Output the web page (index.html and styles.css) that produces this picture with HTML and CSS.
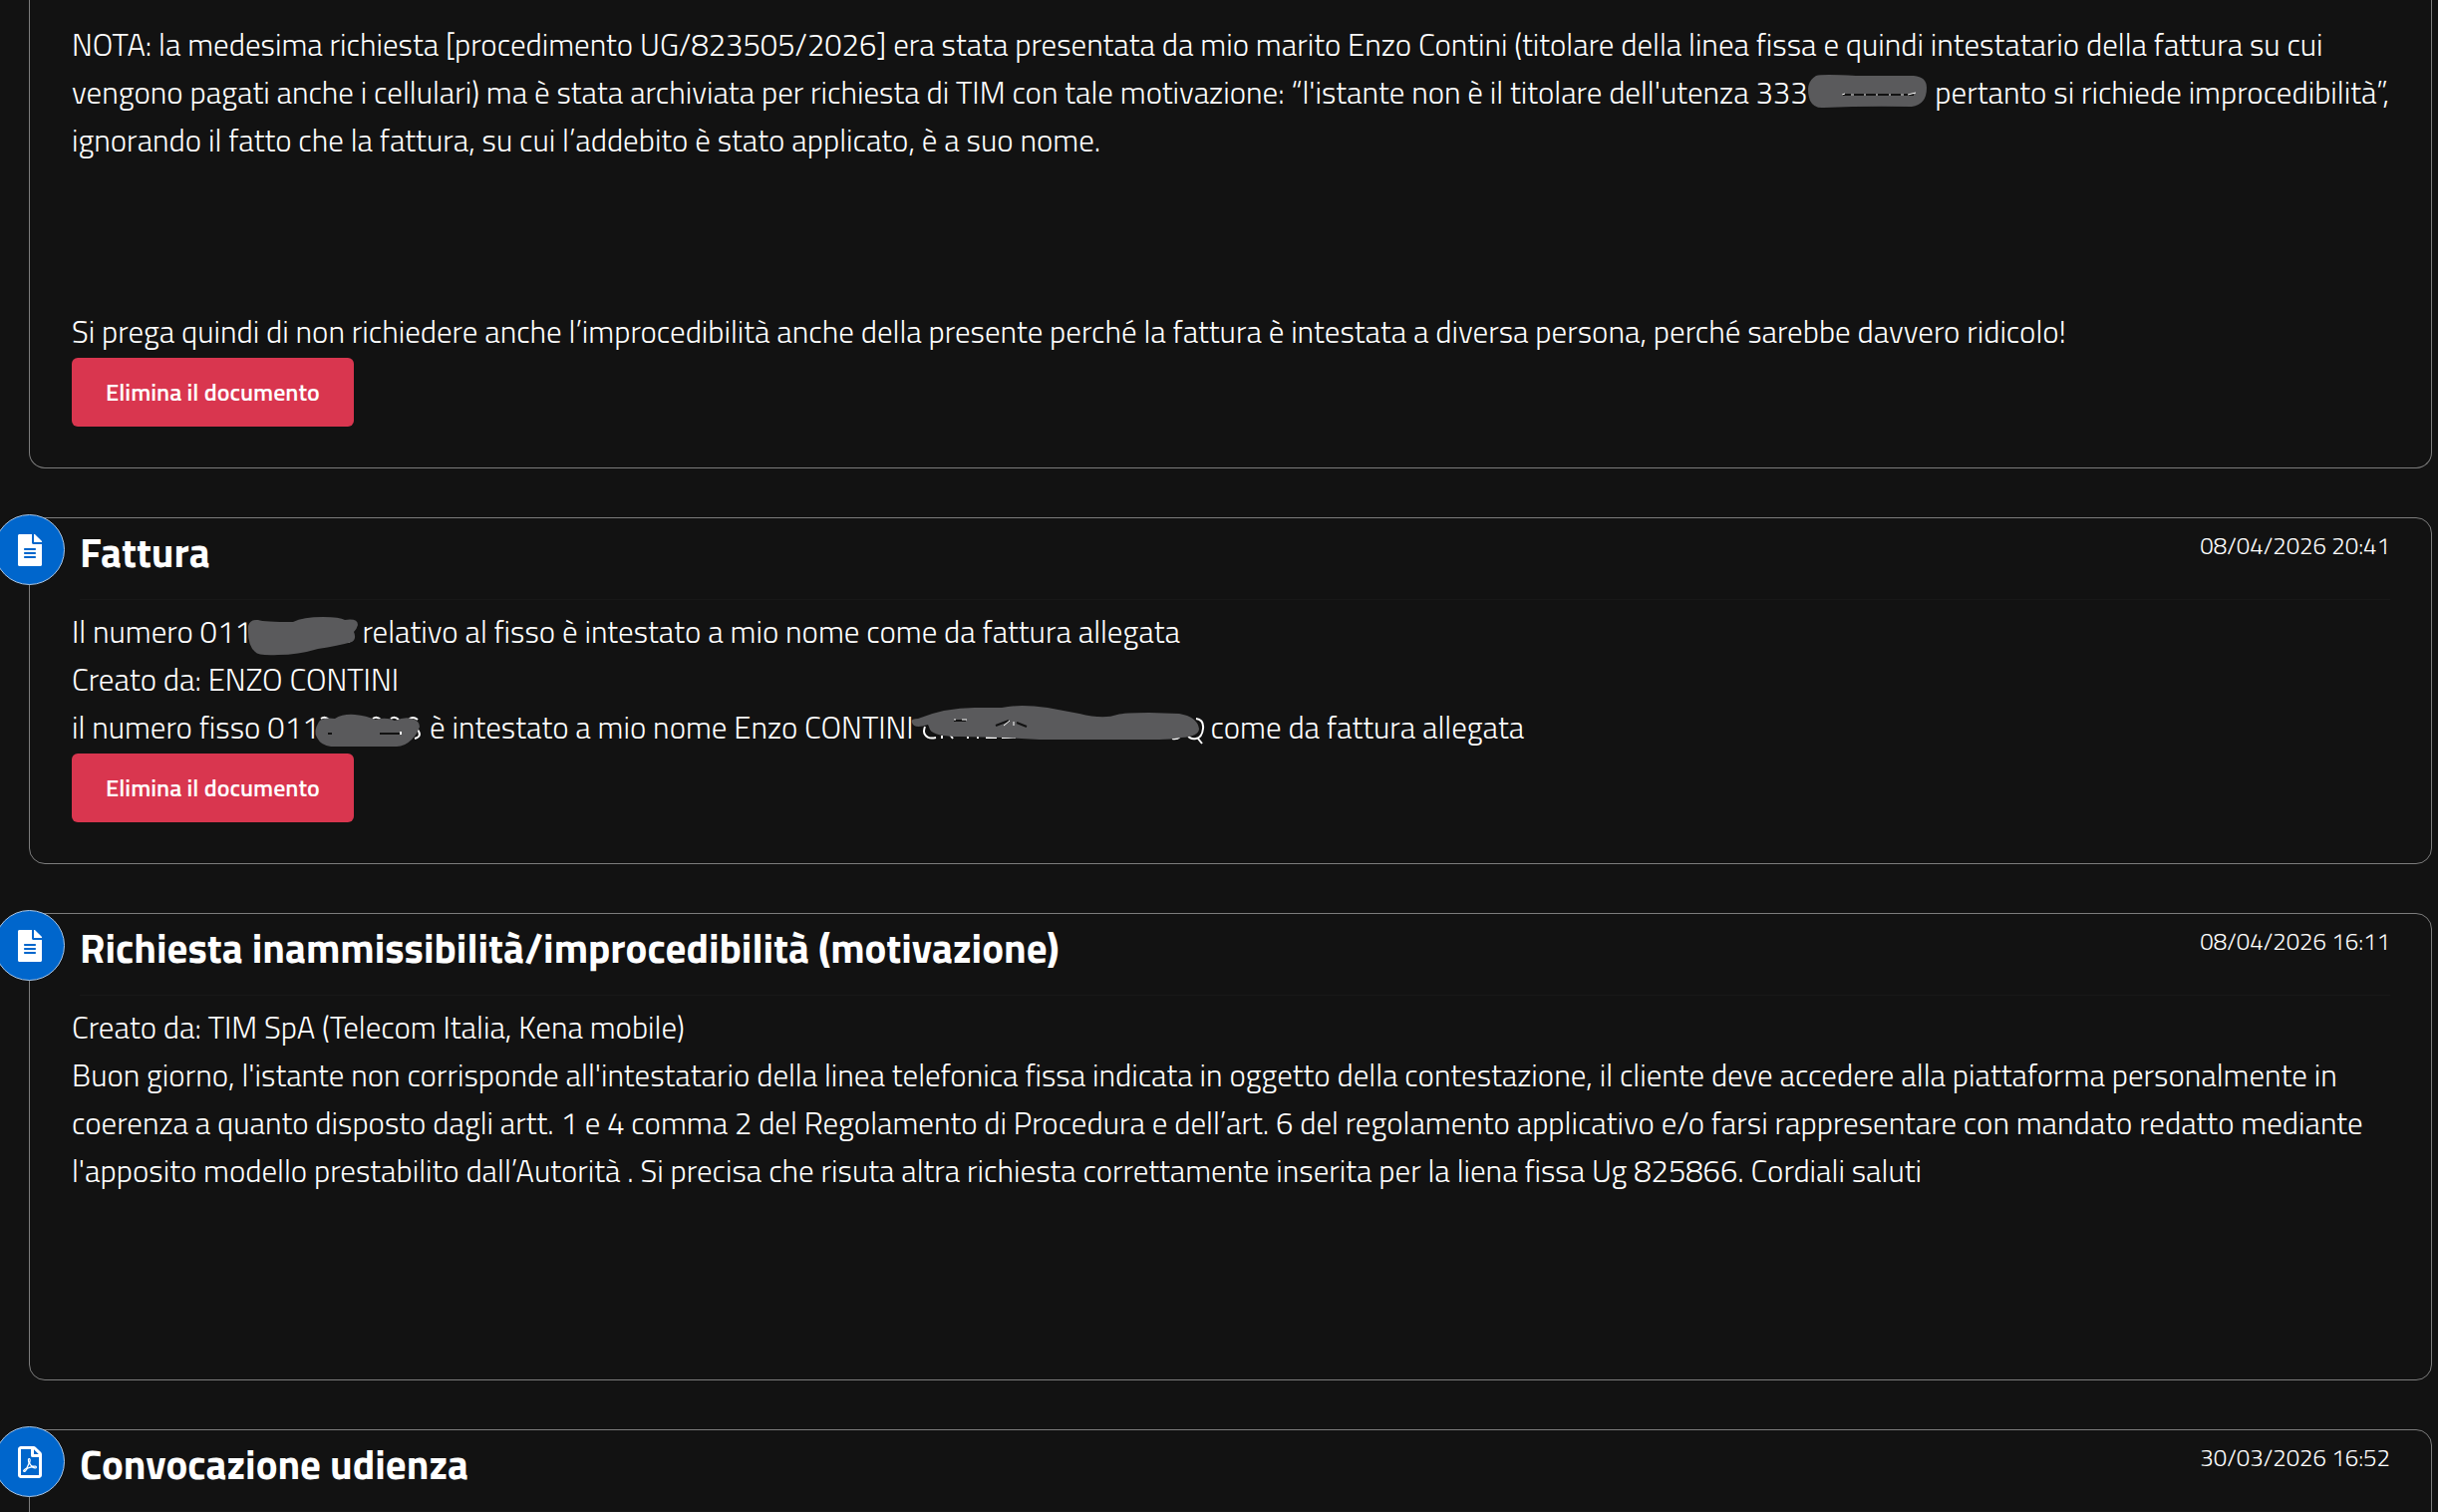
FILE: index.html
```
<!DOCTYPE html>
<html lang="it">
<head>
  <meta charset="UTF-8">
  <title>Fascicolo procedimento</title>
  <link rel="stylesheet" href="styles.css">
</head>
<body>
  <svg class="sprite" aria-hidden="true">
    <symbol id="icon-file" viewBox="0 0 384 512">
      <path d="M224 136V0H24C10.700 0 0 10.700 0 24v464c0 13.300 10.700 24 24 24h336c13.300 0 24-10.700 24-24V160H248c-13.200 0-24-10.800-24-24zm64 236c0 6.600-5.400 12-12 12H108c-6.600 0-12-5.400-12-12v-8c0-6.600 5.400-12 12-12h168c6.600 0 12 5.400 12 12v8zm0-64c0 6.600-5.400 12-12 12H108c-6.600 0-12-5.400-12-12v-8c0-6.600 5.400-12 12-12h168c6.600 0 12 5.400 12 12v8zm0-72v8c0 6.600-5.400 12-12 12H108c-6.600 0-12-5.400-12-12v-8c0-6.600 5.400-12 12-12h168c6.600 0 12 5.400 12 12zm96-114.100v6.100H256V0h6.100c6.400 0 12.500 2.500 17 7l97.900 98c4.500 4.500 7 10.600 7 16.900z"/>
    </symbol>
    <symbol id="icon-pdf" viewBox="0 0 384 512">
      <path d="M369.900 97.900L286 14C277 5 264.800 0 252.100 0H48C21.500 0 0 21.500 0 48v416c0 26.500 21.500 48 48 48h288c26.500 0 48-21.500 48-48V131.900c0-12.700-5.100-25-14.100-34zM332.100 128H256V51.900l76.100 76.100zM48 464V48h160v104c0 13.300 10.700 24 24 24h104v288H48zm250.200-143.700c-12.200-12-47-8.700-64.400-6.500-17.200-10.500-28.700-25-36.800-46.300 3.900-16.100 10.100-40.600 5.400-56-4.200-26.200-37.800-23.600-42.600-5.900-4.400 16.100-.4 38.500 7 67.100-10 23.900-24.900 56-35.400 74.400-20 10.300-47 26.200-51 46.200-3.300 15.800 26 55.200 76.100-31.200 22.400-7.400 46.800-16.500 68.400-20.100 18.900 10.200 41 17 55.800 17 25.500 0 28-28.200 17.500-38.700zm-198.100 77.800c5.100-13.700 24.500-29.500 30.400-35-19 30.300-30.400 35.700-30.400 35zm81.600-190.600c7.400 0 6.700 32.100 1.800 40.800-4.400-13.900-4.300-40.800-1.800-40.800zm-24.400 136.600c9.700-16.900 18-37 24.700-54.700 8.300 15.100 18.900 27.200 30.100 35.500-20.800 4.300-38.900 13.100-54.800 19.200zm131.600-5s-5 6-37.300-7.800c35.100-2.600 40.900 5.400 37.300 7.800z"/>
    </symbol>
  </svg>

  <main class="timeline">
    <article class="card card-first">
      <div class="card-body">
        <p>NOTA: la medesima richiesta [procedimento UG/823505/2026] era stata presentata da mio marito Enzo Contini (titolare della linea fissa e quindi intestatario della fattura su cui<br>
        vengono pagati anche i cellulari) ma è stata archiviata per richiesta di TIM con tale motivazione: “l'istante non è il titolare dell'utenza 333<svg class="redacted" width="125" height="48" viewBox="0 0 125 48">
          <path class="ink" d="M12 7Q18 5 52 7L110 7Q123 8 123 19Q123 36 108 38Q62 37 20 39Q10 40 6 32Q0 14 12 7Z"/>
          <path class="trace-dark" d="M38 26H110"/>
          <path class="trace-thin" d="M38 26l3-1M47 26h3M60 26h2M72 26h2M85 26h2M97 26h3M104 26l8-2"/>
        </svg> pertanto si richiede improcedibilità”,<br>
        ignorando il fatto che la fattura, su cui l’addebito è stato applicato, è a suo nome.</p>
        <br><br><br>
        <p>Si prega quindi di non richiedere anche l’improcedibilità anche della presente perché la fattura è intestata a diversa persona, perché sarebbe davvero ridicolo!</p>
        <button type="button" class="btn-danger">Elimina il documento</button>
      </div>
    </article>

    <article class="card">
      <div class="card-icon"><svg width="24" height="32"><use href="#icon-file"/></svg></div>
      <header class="card-header">
        <h2>Fattura</h2>
        <time>08/04/2026 20:41</time>
      </header>
      <div class="card-body">
        <p>Il numero 011<svg class="redacted" width="108" height="48" viewBox="0 0 108 48">
          <path class="trace" d="M102 24Q109 31 100 34"/>
          <path class="ink" d="M0 18Q2 11 10 12Q16 14 45 14Q55 9 75 9Q92 9 97 12Q110 10 110 17Q109 21 106 24Q109 31 104 34Q90 38 70 41Q50 47 30 47Q10 48 7 44Q-1 38 0 18Z"/>
        </svg> relativo al fisso è intestato a mio nome come da fattura allegata</p>
        <p>Creato da: ENZO CONTINI</p>
        <p>il numero fisso 011<svg class="redacted" width="108" height="48" viewBox="0 0 108 48">
          <path class="trace" d="M6 15q4-3 8 1M58 15q4-3 8 1M76 15q4-3 8 1M94 16Q98 12 103 16M103 26Q108 33 100 35"/>
          <path class="ink" d="M4 18Q8 13 20 15Q28 10 40 11Q52 12 60 16Q72 13 80 17Q90 13 97 15Q105 17 105 23Q103 30 97 36Q90 43 82 43L16 43Q6 42 2 34Q-2 28 4 18Z"/>
          <path class="trace-dark" d="M13 30h4M65 30h22"/>
          <path class="trace" d="M86 31v-3"/>
        </svg> è intestato a mio nome Enzo CONTINI<svg class="redacted" width="295" height="48" viewBox="0 0 295 48">
          <path class="trace" d="M15 23Q13 28 15 31Q18 36 26 34M32 32V35M43 35l-3-4M58 33V35M68 35V33M76 34H87M92 34H106M263 35q5 1 8-2M287 15Q295 16 294 25Q293 34 287 35Q281 36 279 32M289 35l4 5"/>
          <path class="ink" d="M2 19Q0 15 8 15Q35 4 65 4L92 4Q110 0 138 4L170 10Q194 16 208 11Q214 9 240 9L270 10Q288 13 290 25Q290 33 272 34Q262 36 250 36L130 36Q110 35 92 34L50 33Q24 33 20 26Q19 23 18 21Q4 26 2 19Z"/>
          <path class="trace-dark" d="M44 17H56M86 22L99 17M107 19L117 23"/>
          <path class="trace-thin" d="M44 16h2M52 16h5M94 22l6-5M104 18v4"/>
        </svg> come da fattura allegata</p>
        <button type="button" class="btn-danger">Elimina il documento</button>
      </div>
    </article>

    <article class="card">
      <div class="card-icon"><svg width="24" height="32"><use href="#icon-file"/></svg></div>
      <header class="card-header">
        <h2>Richiesta inammissibilità/improcedibilità (motivazione)</h2>
        <time>08/04/2026 16:11</time>
      </header>
      <div class="card-body">
        <p>Creato da: TIM SpA (Telecom Italia, Kena mobile)</p>
        <p>Buon giorno, l'istante non corrisponde all'intestatario della linea telefonica fissa indicata in oggetto della contestazione, il cliente deve accedere alla piattaforma personalmente in<br>
        coerenza a quanto disposto dagli artt. 1 e 4 comma 2 del Regolamento di Procedura e dell’art. 6 del regolamento applicativo e/o farsi rappresentare con mandato redatto mediante<br>
        l'apposito modello prestabilito dall’Autorità . Si precisa che risuta altra richiesta correttamente inserita per la liena fissa Ug 825866. Cordiali saluti</p>
        <br><br><br>
      </div>
    </article>

    <article class="card">
      <div class="card-icon"><svg width="24" height="32"><use href="#icon-pdf"/></svg></div>
      <header class="card-header">
        <h2>Convocazione udienza</h2>
        <time>30/03/2026 16:52</time>
      </header>
      <div class="card-body"></div>
    </article>
  </main>
</body>
</html>
```
FILE: styles.css
```
* {
  box-sizing: border-box;
}

body {
  margin: 0;
  height: 100vh;
  overflow: hidden;
  background-color: #121212;
  color: #fff;
  font-family: "Titillium Web", Roboto, sans-serif;
  font-size: 31px;
  font-weight: 300;
  line-height: 48px;
}

.sprite {
  display: none;
}

.timeline {
  display: flex;
  flex-direction: column;
  gap: 49px;
  padding: 0 6px 0 29px;
}

.card {
  position: relative;
  padding: 0 41px 41px 42px;
  border: 1px solid #7c7c7c;
  border-radius: 16px;
}

.card-first {
  padding-top: 21px;
  border-top: none;
  border-radius: 0 0 16px 16px;
}

/* round marker on the card corner */
.card-icon {
  position: absolute;
  top: -4px;
  left: -36px;
  display: flex;
  align-items: center;
  justify-content: center;
  width: 71px;
  height: 71px;
  border: 1px solid #a9c6e6;
  border-radius: 50%;
  background-color: #0066cc;
  fill: #fff;
}

.card-header {
  display: flex;
  justify-content: space-between;
  align-items: flex-start;
  margin: 0 0 8px 8px;
  padding: 10px 0 23px;
  border-bottom: 1px solid #181818;
}

.card-header h2 {
  margin: 0;
  font-size: 41px;
  font-weight: 700;
  line-height: 48px;
}

.card-header time {
  font-size: 24px;
  line-height: 34px;
}

.card-body p {
  margin: 0;
  white-space: nowrap;
}

.redacted {
  margin-left: -4px;
  vertical-align: top;
  overflow: visible;
}

.ink {
  fill: #5a5a5c;
}

.trace,
.trace-thin,
.trace-dark {
  fill: none;
  stroke: #fff;
  stroke-width: 2;
}

.trace-thin {
  stroke-width: 1;
}

.trace-dark {
  stroke: #121212;
}

.btn-danger {
  display: block;
  margin-top: 2px;
  padding: 16px 34px 17px;
  border: none;
  border-radius: 6px;
  background-color: #d9364f;
  color: #fff;
  font-family: inherit;
  font-size: 24px;
  font-weight: 600;
  line-height: 36px;
  cursor: pointer;
}
```
